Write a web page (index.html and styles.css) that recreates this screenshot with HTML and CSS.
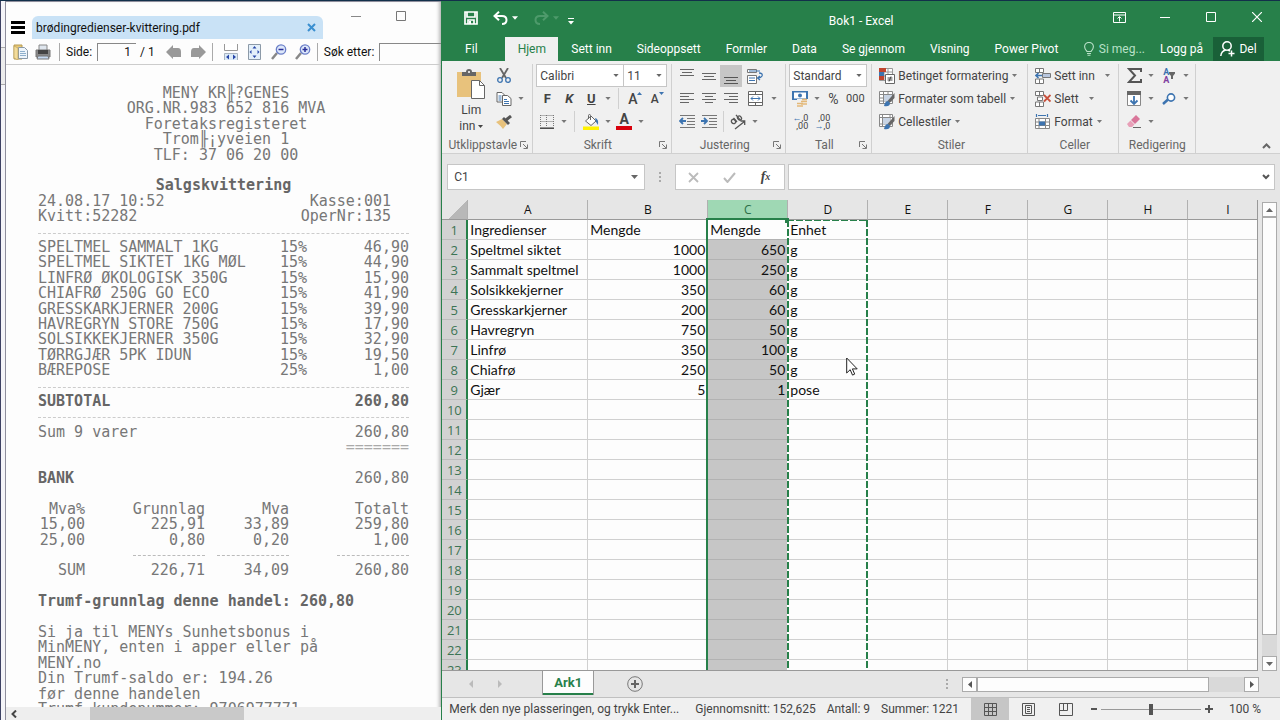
FILE: index.html
```html
<!DOCTYPE html>
<html lang="nb">
<head>
<meta charset="utf-8">
<title>Bok1 - Excel</title>
<link rel="stylesheet" href="styles.css">
</head>
<body>
<svg width="0" height="0" class="defs" aria-hidden="true">
  <symbol id="dd" viewBox="0 0 7 4"><path d="M0 0h7L3.500 4z" fill="currentColor"/></symbol>
  <symbol id="launch" viewBox="0 0 8 8"><path d="M.5 6V.5H6M3 3l4 4M7.500 3.500v4h-4" fill="none" stroke="#777"/></symbol>
</svg>
<div class="desktop">
  <div class="behind"><span></span></div>
  <section class="viewer">
    <header class="v-top">
      <button class="burger" aria-label="Meny"><i></i><i></i><i></i></button>
      <div class="v-tab"><span>brødingredienser-kvittering.pdf</span><button aria-label="Lukk fane"><svg width="9" height="9" viewBox="0 0 9 9"><path d="M1 1l7 7M8 1L1 8" stroke="#3a8fd0" stroke-width="2"/></svg></button></div>
      <div class="v-win">
        <button aria-label="Minimer"><svg width="10" height="10"><path d="M0 5.500h10" stroke="#888"/></svg></button>
        <button aria-label="Maksimer"><svg width="10" height="10"><path d="M.5.5h9v9h-9z" stroke="#777" fill="none"/></svg></button>
      </div>
    </header>
    <div class="v-tools">
      <button aria-label="Åpne"><svg width="16" height="16" viewBox="0 0 16 16"><path d="M1 1h8v14H1z" fill="#e6c878" stroke="#b79a50"/><path d="M5.500 3.500h6l3 3v8h-9z" fill="#eef5fb" stroke="#8a9aa8"/><path d="M7 7.500h5M7 9.500h6M7 11.500h6" stroke="#8fb0cc"/><path d="M1 2l4 2v12l-4-2z" fill="#f3dc9a" stroke="#b79a50" stroke-width=".6"/></svg></button>
      <button aria-label="Skriv ut"><svg width="16" height="16" viewBox="0 0 16 16"><path d="M4 1h8v6H4z" fill="#dfe6ee" stroke="#888"/><path d="M1 6h14v7H1z" fill="#888" stroke="#777"/><path d="M3 6h10v4H3z" fill="#444"/><path d="M3 12h10l1 3H2z" fill="#c4d8f0" stroke="#777"/></svg></button>
      <i class="v-sep"></i>
      <label for="page">Side:</label>
      <input id="page" class="page" value="1"><span class="total">/ 1</span>
      <button aria-label="Forrige"><svg width="16" height="14" viewBox="0 0 16 14"><path d="M0 7l7-7v3h5q3 0 3 4v5h-8v2z" fill="#999"/></svg></button>
      <button aria-label="Neste"><svg width="16" height="14" viewBox="0 0 16 14"><path d="M16 7L9 0v3H4q-3 0-3 4v5h8v2z" fill="#999"/></svg></button>
      <i class="v-sep"></i>
      <button aria-label="Tilpass bredde"><svg width="14" height="16" viewBox="0 0 14 16"><path d="M.5 0v6.500h13V0" fill="#fff" stroke="#999"/><path d="M.5 16V9.500h13V16" fill="#dcebf8" stroke="#a8b4c0"/><path d="M5 10.500v5L2 13zM9 10.500v5l3-2.500z" fill="#2746a8"/></svg></button>
      <button aria-label="Tilpass side"><svg width="14" height="16" viewBox="0 0 14 16"><path d="M.5.5h12v15H.5z" fill="#e4f0fa" stroke="#8c9aa8"/><path d="M6.500 2l2 2.500h-4zM6.500 14l2-2.500h-4zM1.500 8l2-2v4zM11.500 8l-2-2v4z" fill="#2746a8"/></svg></button>
      <button aria-label="Zoom ut"><svg width="16" height="16" viewBox="0 0 16 16"><path d="M1 15l5-6" stroke="#888" stroke-width="2.500"/><circle cx="10" cy="5.500" r="4.700" fill="#dde8fa" stroke="#6b7fc8" stroke-width="1.300"/><path d="M7.500 5.500h5" stroke="#2a2f9a" stroke-width="1.500"/></svg></button>
      <button aria-label="Zoom inn"><svg width="16" height="16" viewBox="0 0 16 16"><path d="M1 15l5-6" stroke="#888" stroke-width="2.500"/><circle cx="10" cy="5.500" r="4.700" fill="#dde8fa" stroke="#6b7fc8" stroke-width="1.300"/><path d="M7.500 5.500h5M10 3v5" stroke="#2a2f9a" stroke-width="1.500"/></svg></button>
      <i class="v-sep"></i>
      <label for="find">Søk etter:</label>
      <input id="find" class="find">
    </div>
    <main class="doc">
      <div class="receipt">
        <p class="mid">MENY KR╟?GENES</p>
        <p class="mid">ORG.NR.983 652 816 MVA</p>
        <p class="mid">Foretaksregisteret</p>
        <p class="mid">Trom╟¡yveien 1</p>
        <p class="mid">TLF: 37 06 20 00</p>
        <p></p>
        <p class="mid bold title">Salgskvittering</p>
        <p class="ends till"><span>24.08.17 10:52</span><span>Kasse:001</span></p>
        <p class="ends till"><span>Kvitt:52282</span><span>OperNr:135</span></p>
        <p class="rule"></p>
        <p class="item"><span>SPELTMEL SAMMALT 1KG</span><span>15%</span><span>46,90</span></p>
        <p class="item"><span>SPELTMEL SIKTET 1KG MØL</span><span>15%</span><span>44,90</span></p>
        <p class="item"><span>LINFRØ ØKOLOGISK 350G</span><span>15%</span><span>15,90</span></p>
        <p class="item"><span>CHIAFRØ 250G GO ECO</span><span>15%</span><span>41,90</span></p>
        <p class="item"><span>GRESSKARKJERNER 200G</span><span>15%</span><span>39,90</span></p>
        <p class="item"><span>HAVREGRYN STORE 750G</span><span>15%</span><span>17,90</span></p>
        <p class="item"><span>SOLSIKKEKJERNER 350G</span><span>15%</span><span>32,90</span></p>
        <p class="item"><span>TØRRGJÆR 5PK IDUN</span><span>15%</span><span>19,50</span></p>
        <p class="item"><span>BÆREPOSE</span><span>25%</span><span>1,00</span></p>
        <p class="rule"></p>
        <p class="ends bold"><span>SUBTOTAL</span><span>260,80</span></p>
        <p class="rule"></p>
        <p class="ends"><span>Sum 9 varer</span><span>260,80</span></p>
        <p class="ends faint"><span></span><span>=======</span></p>
        <p></p>
        <p class="ends"><b>BANK</b><span>260,80</span></p>
        <p></p>
        <p class="vat"><span>Mva%</span><span>Grunnlag</span><span>Mva</span><span>Totalt</span></p>
        <p class="vat"><span>15,00</span><span>225,91</span><span>33,89</span><span>259,80</span></p>
        <p class="vat"><span>25,00</span><span>0,80</span><span>0,20</span><span>1,00</span></p>
        <p class="vat sums"><span></span><i></i><i></i><i></i></p>
        <p class="vat"><span>SUM</span><span>226,71</span><span>34,09</span><span>260,80</span></p>
        <p></p>
        <p class="bold">Trumf-grunnlag denne handel: 260,80</p>
        <p></p>
        <p>Si ja til MENYs Sunhetsbonus i</p>
        <p>MinMENY, enten i apper eller på</p>
        <p>MENY.no</p>
        <p>Din Trumf-saldo er: 194.26</p>
        <p>før denne handelen</p>
        <p>Trumf-kundenummer: 9706977771</p>
      </div>
    </main>
    <div class="v-scroll"><button aria-label="Rull til venstre"><svg width="6" height="8"><path d="M5 .5L1.500 4 5 7.500" fill="none" stroke="#444" stroke-width="2"/></svg></button><i></i></div>
  </section>

  <section class="excel">
    <header class="titlebar">
      <div class="qat">
        <button aria-label="Lagre"><svg width="14" height="14" viewBox="0 0 14 14"><path d="M1 1h12v12H1zM3 1v5h8V1M4 13V9h6v4" fill="none" stroke="#fff" stroke-width="1.700"/><path d="M5 10h2v3H5z" fill="#fff"/></svg></button>
        <button aria-label="Angre"><svg width="15" height="14" viewBox="0 0 15 14"><path d="M6 .8L1.500 5 6 9.200M2 5h7q4.500 0 4.500 4T9 13" fill="none" stroke="#fff" stroke-width="2"/></svg></button>
        <button class="narrow" aria-label="Angre-liste"><svg width="6" height="4"><use href="#dd"/></svg></button>
        <button class="dim" aria-label="Gjør om"><svg width="15" height="14" viewBox="0 0 15 14"><path d="M9 .8L13.500 5 9 9.200M13 5H6Q1.500 5 1.500 9T6 13" fill="none" stroke="currentColor" stroke-width="2"/></svg></button>
        <button class="dim narrow" aria-label="Gjør om-liste"><svg width="6" height="4"><use href="#dd"/></svg></button>
        <button aria-label="Tilpass verktøylinjen"><svg width="6" height="7" viewBox="0 0 6 7"><path d="M0 .5h6" stroke="#fff"/><path d="M0 3h6L3 6.500z" fill="#fff"/></svg></button>
      </div>
      <h1>Bok1 - Excel</h1>
      <div class="win">
        <button aria-label="Visningsalternativer for bånd"><svg width="13" height="11" viewBox="0 0 13 11"><path d="M.5.5h12v10H.5zM.5 3h12M6.500 9.500V5M4.500 6.500l2-2 2 2" fill="none" stroke="#fff"/></svg></button>
        <button aria-label="Minimer"><svg width="10" height="10"><path d="M0 5.500h10" stroke="#fff"/></svg></button>
        <button aria-label="Maksimer"><svg width="10" height="10"><path d="M.5.5h9v9h-9z" stroke="#fff" fill="none"/></svg></button>
        <button aria-label="Lukk"><svg width="10" height="10"><path d="M0 0l10 10M10 0L0 10" stroke="#fff" stroke-width="1.200"/></svg></button>
      </div>
    </header>
    <nav class="tabs">
      <button class="file">Fil</button><button class="active">Hjem</button><button>Sett inn</button><button>Sideoppsett</button><button>Formler</button><button>Data</button><button>Se gjennom</button><button>Visning</button><button>Power Pivot</button>
      <span class="tabs-end">
        <button class="tell"><svg width="10" height="14" viewBox="0 0 10 14"><path d="M3 9.500Q.6 7 .6 4.800A4.400 4.400 0 019.400 4.800Q9.400 7 7 9.500zM3 11.500h4M3.500 13.300h3" fill="none" stroke="currentColor" stroke-width="1.100"/></svg>Si meg...</button>
        <button class="login">Logg på</button>
        <button class="share"><svg width="15" height="16" viewBox="0 0 15 16"><circle cx="7" cy="5" r="4.200" fill="none" stroke="#fff" stroke-width="1.500"/><path d="M.8 15q.5-5 5-6M8 9l2 1M11.500 9.500v6M8.500 12.500h6" fill="none" stroke="#fff" stroke-width="1.500"/></svg>Del</button>
      </span>
    </nav>
    <div class="ribbon">
      <div class="group g-clip">
        <div class="clip">
          <button class="paste"><svg width="28" height="30" viewBox="0 0 28 30"><path d="M0 3h24v25H0z" fill="#e8c27c"/><path d="M5 3h4q0-3 3-3t3 3h4v4H5z" fill="#666"/><circle cx="12" cy="3" r="1" fill="#fff"/><path d="M14.500 11.500h8l5 5v13h-13z" fill="#fff" stroke="#666"/><path d="M22.500 11.500v5h5" fill="none" stroke="#666"/></svg><span>Lim<br>inn <svg width="5" height="3"><use href="#dd"/></svg></span></button>
          <div class="rows">
            <div class="row"><button class="b" aria-label="Klipp ut"><svg width="14" height="15" viewBox="0 0 14 15"><path d="M3 0l6 10M11 0L5 10" stroke="#666" stroke-width="1.800"/><circle cx="3" cy="12" r="2.300" fill="none" stroke="#3d74b0" stroke-width="1.300"/><circle cx="11" cy="12" r="2.300" fill="none" stroke="#3d74b0" stroke-width="1.300"/></svg></button></div>
            <div class="row"><button class="b" aria-label="Kopier"><svg width="16" height="14" viewBox="0 0 16 14"><path d="M1 .5h5l3 3V10H1z" fill="#fff" stroke="#666"/><path d="M6.500 3.500h5l3.500 3v7H6.500z" fill="#fff" stroke="#666"/><path d="M2.500 4h3M2.500 6h3M2.500 8h3M8 7.500h3M8 9.500h5M8 11.500h5" stroke="#3d74b0"/></svg></button><button class="dd" aria-label="Kopieringsvalg"><svg width="6" height="3"><use href="#dd"/></svg></button></div>
            <div class="row"><button class="b" aria-label="Kopier format"><svg width="16" height="14" viewBox="0 0 16 14"><path d="M0 7l6-3 5 5-4 5q-2-3-7-7z" fill="#e8c27c"/><path d="M6 4l2-2 6 6-2 2z" fill="#555"/><path d="M10 5l5-4" stroke="#555" stroke-width="3"/></svg></button></div>
          </div>
        </div>
        <div class="cap"><span>Utklippstavle</span><svg width="8" height="8"><use href="#launch"/></svg></div>
      </div>
      <div class="group g-font">
        <div class="row">
          <div class="combo c-name"><input value="Calibri" aria-label="Skrift"><svg width="6" height="3"><use href="#dd"/></svg></div><div class="combo c-size"><input value="11" aria-label="Skriftstørrelse"><svg width="6" height="3"><use href="#dd"/></svg></div>
        </div>
        <div class="row">
          <button class="b bold" aria-label="Fet">F</button><button class="b bold ital" aria-label="Kursiv">K</button><button class="b bold under" aria-label="Understreking">U</button><button class="dd" aria-label="Understrekingsvalg"><svg width="6" height="3"><use href="#dd"/></svg></button><i class="sep"></i><button class="b grow" aria-label="Større skrift">A<svg width="5" height="3"><path d="M0 3h5L2.500 0z" fill="#3d74b0"/></svg></button><button class="b shrink" aria-label="Mindre skrift">A<svg width="5" height="3"><path d="M0 0h5L2.500 3z" fill="#3d74b0"/></svg></button>
        </div>
        <div class="row">
          <button class="b" aria-label="Kantlinjer"><svg width="14" height="14" viewBox="0 0 14 14"><path d="M.5.5h13M.5 6.500h13M.5 0v12M6.500 0v12M13.500 0v12" stroke="#777" stroke-dasharray="1 1"/><path d="M0 13.200h14" stroke="#444" stroke-width="1.500"/></svg></button><button class="dd" aria-label="Kantlinjevalg"><svg width="6" height="3"><use href="#dd"/></svg></button><i class="sep"></i><button class="b" aria-label="Fyllfarge"><svg width="16" height="16" viewBox="0 0 16 16"><path d="M0 12.500h16V16H0z" fill="#fff200"/><path d="M2.500 7L8 2l5 5-5 4.500z" fill="#fff" stroke="#666"/><path d="M5.500 5V1.500q0-1 1-1t1 1V6" fill="none" stroke="#666"/><path d="M12 4q4 1 3 7l-2-3z" fill="#3d74b0"/></svg></button><button class="dd" aria-label="Fyllfargevalg"><svg width="6" height="3"><use href="#dd"/></svg></button><button class="b fcolor" aria-label="Skriftfarge">A</button><button class="dd" aria-label="Skriftfargevalg"><svg width="6" height="3"><use href="#dd"/></svg></button>
        </div>
        <div class="cap"><span>Skrift</span><svg width="8" height="8"><use href="#launch"/></svg></div>
      </div>
      <div class="group g-align">
        <div class="row">
          <button class="b" aria-label="Toppjuster"><svg width="14" height="16"><path d="M0 1.500h14M2 4.500h10M0 7.500h14" stroke="#666"/></svg></button><button class="b" aria-label="Midtstill loddrett"><svg width="14" height="16"><path d="M0 5.500h14M2 8.500h10M0 11.500h14" stroke="#666"/></svg></button><button class="b on" aria-label="Bunnjuster"><svg width="14" height="16"><path d="M0 9.500h14M2 12.500h10M0 15.500h14" stroke="#555"/></svg></button><button class="b wide" aria-label="Bryt tekst"><svg width="16" height="16" viewBox="0 0 16 16"><path d="M.5 1.500h9v3h-9zM.5 7.500h9v8h-9z" fill="#fff" stroke="#777"/><path d="M2 3h11M2 10h6M2 12.500h6" stroke="#3d74b0"/><path d="M12 5q4 0 3 3-1 2-4 2M13 8l-2.500 2 2.500 2" fill="none" stroke="#3d74b0" stroke-width="1.300"/></svg></button>
        </div>
        <div class="row">
          <button class="b" aria-label="Venstrejuster"><svg width="14" height="12"><path d="M0 .5h14M0 3.500h9M0 6.500h14M0 9.500h9" stroke="#666"/></svg></button><button class="b" aria-label="Midtstill"><svg width="14" height="12"><path d="M0 .5h14M3 3.500h8M0 6.500h14M3 9.500h8" stroke="#666"/></svg></button><button class="b" aria-label="Høyrejuster"><svg width="14" height="12"><path d="M0 .5h14M5 3.500h9M0 6.500h14M5 9.500h9" stroke="#666"/></svg></button><button class="b wide" aria-label="Slå sammen og midtstill"><svg width="15" height="15" viewBox="0 0 15 15"><path d="M.5.5h14v14H.5zM.5 3.500h14M.5 11.500h14M7.500 0v3M7.500 12v3" fill="#fff" stroke="#666"/><path d="M3 7.500h9M5 5.500l-2 2 2 2M10 5.500l2 2-2 2" fill="none" stroke="#3d74b0"/></svg></button><button class="dd" aria-label="Sammenslåingsvalg"><svg width="6" height="3"><use href="#dd"/></svg></button>
        </div>
        <div class="row">
          <button class="b" aria-label="Reduser innrykk"><svg width="16" height="13"><path d="M1 .5h15M8 3.500h8M8 6.500h8M8 9.500h8M1 12.500h15" stroke="#777"/><path d="M1 6h6M4 3L1 6l3 3" fill="none" stroke="#3d74b0" stroke-width="1.800"/></svg></button><button class="b" aria-label="Øk innrykk"><svg width="16" height="13"><path d="M1 .5h15M8 3.500h8M8 6.500h8M8 9.500h8M1 12.500h15" stroke="#777"/><path d="M0 6h6M3 3l3 3-3 3" fill="none" stroke="#3d74b0" stroke-width="1.800"/></svg></button><i class="sep slim"></i><button class="b" aria-label="Retning"><svg width="16" height="16" viewBox="0 0 16 16"><g fill="none" stroke="#555" stroke-width="1.300"><ellipse cx="3.500" cy="7.500" rx="2" ry="2.300" transform="rotate(-40 3.500 7.500)"/><path d="M3.500 4l3.500 4M6 .8l4.500 5.500"/><ellipse cx="9.500" cy="4" rx="1.800" ry="2.200" transform="rotate(-40 9.500 4)"/><path d="M5 15l9.500-7.500M10.500 7h4.200v4"/></g></svg></button><button class="dd" aria-label="Retningsvalg"><svg width="6" height="3"><use href="#dd"/></svg></button>
        </div>
        <div class="cap"><span>Justering</span><svg width="8" height="8"><use href="#launch"/></svg></div>
      </div>
      <div class="group g-num">
        <div class="row"><div class="combo c-num"><input value="Standard" aria-label="Tallformat"><svg width="6" height="3"><use href="#dd"/></svg></div></div>
        <div class="row">
          <button class="b" aria-label="Valutaformat"><svg width="16" height="16" viewBox="0 0 16 16"><path d="M0 0h16v9H0z" fill="#3d74b0"/><path d="M2 1.500h12v6H2z" fill="#fff"/><circle cx="8" cy="4.500" r="2" fill="#3d74b0"/><path d="M5 8h11v8H5z" fill="#f0f0f0"/><path d="M10 8.500h5M9 10.500h6M5 12.500h6M9 13h6M5 15h6" stroke="#e3b878" stroke-width="1.600"/></svg></button><button class="dd" aria-label="Valutavalg"><svg width="6" height="3"><use href="#dd"/></svg></button><button class="b pct" aria-label="Prosent">%</button><button class="b mil" aria-label="Tusenskille">000</button>
        </div>
        <div class="row">
          <button class="b dec" aria-label="Flere desimaler"><span><em>←</em>,0<br>,00</span></button><button class="b dec" aria-label="Færre desimaler"><span>,00<br><em>→</em>,0</span></button>
        </div>
        <div class="cap"><span>Tall</span><svg width="8" height="8"><use href="#launch"/></svg></div>
      </div>
      <div class="group g-style">
        <div class="row"><button class="t"><svg width="16" height="16" viewBox="0 0 16 16"><path d="M.5.5h13v12H.5zM.5 4h13M.5 8h13M5 .5v12M9 .5v12" fill="#fff" stroke="#999"/><path d="M0 0h7v4H0zM0 8h5v4H0z" fill="#c0452f"/><path d="M0 4h5v4H0z" fill="#3d74b0"/><path d="M6.500 6.500h9v9h-9z" fill="#fff" stroke="#666"/><path d="M8.500 10h5M8.500 12h5M12 8.500l-2 5" stroke="#444"/></svg>Betinget formatering<svg class="a" width="5" height="3"><use href="#dd"/></svg></button></div>
        <div class="row"><button class="t"><svg width="16" height="16" viewBox="0 0 16 16"><path d="M.5.5h13v12H.5zM.5 3.500h13M.5 7h13M.5 10h13M4.500.5v12M9 .5v12" fill="#fff" stroke="#888"/><path d="M5 4h8v6H5z" fill="#c8d4e4"/><path d="M15.500 2v5l-5 5-2-2z" fill="#666"/><path d="M5 15q1-5 4-5l2 2q0 4-6 3z" fill="#3d74b0"/></svg>Formater som tabell<svg class="a" width="5" height="3"><use href="#dd"/></svg></button></div>
        <div class="row"><button class="t"><svg width="16" height="16" viewBox="0 0 16 16"><path d="M.5.5h13v12H.5zM.5 3.500h13M.5 10h13M3.500.5v12M11 .5v12" fill="#fff" stroke="#888"/><path d="M4 4h7v6H4z" fill="#c8d4e4"/><path d="M15.500 2v5l-5 5-2-2z" fill="#666"/><path d="M5 15q1-5 4-5l2 2q0 4-6 3z" fill="#3d74b0"/></svg>Cellestiler<svg class="a" width="5" height="3"><use href="#dd"/></svg></button></div>
        <div class="cap"><span>Stiler</span></div>
      </div>
      <div class="group g-cells">
        <div class="row"><button class="t far"><svg width="16" height="16" viewBox="0 0 16 16"><path d="M.5.5h8v4h-8zM.5 11h8v4.500h-8zM4.500.5v4M4.500 11v4.500M7.500 5.500h8v4h-8z" fill="#fff" stroke="#777"/><path d="M8 6h7v3H8z" fill="#b8c6de"/><path d="M1 7.500h6M3.500 5L1 7.500 3.500 10" fill="none" stroke="#3d74b0" stroke-width="1.600"/></svg>Sett inn<svg class="a" width="5" height="3"><use href="#dd"/></svg></button></div>
        <div class="row"><button class="t far"><svg width="16" height="16" viewBox="0 0 16 16"><path d="M.5.5h8v4h-8zM.5 11h8v4.500h-8zM4.500.5v4M4.500 11v4.500M2.500 6h5v3.500h-5z" fill="#fff" stroke="#777"/><path d="M9 4l6.500 6.500M15.500 4L9 10.500" stroke="#c8503c" stroke-width="1.800"/></svg>Slett<svg class="a" width="5" height="3"><use href="#dd"/></svg></button></div>
        <div class="row"><button class="t"><svg width="16" height="16" viewBox="0 0 16 16"><path d="M.5 4.500h14v10H.5zM.5 8h14M.5 11.500h14M4 4.500v10M10.500 4.500v10" fill="#fff" stroke="#888"/><path d="M4 7.500h6v4H4z" fill="#3d74b0"/><path d="M1.500 0v3M12.500 0v3M3 1.500h8" stroke="#3d74b0" stroke-width="1.200"/></svg>Format<svg class="a" width="5" height="3"><use href="#dd"/></svg></button></div>
        <div class="cap"><span>Celler</span></div>
      </div>
      <div class="group g-edit">
        <div class="row"><button class="b" aria-label="Autosummer"><svg width="15" height="15" viewBox="0 0 15 15"><path d="M14 4V1H2l6 6.500L2 14h12v-3" fill="none" stroke="#555" stroke-width="2"/></svg></button><button class="dd" aria-label="Summeringsvalg"><svg width="6" height="3"><use href="#dd"/></svg></button><button class="b sort" aria-label="Sorter og filtrer"><span><em>A</em><br>A</span><svg width="6" height="7"><path d="M0 0h6v1.500L4 4v3H2V4L0 1.500z" fill="#666"/></svg></button><button class="dd" aria-label="Sorteringsvalg"><svg width="6" height="3"><use href="#dd"/></svg></button></div>
        <div class="row"><button class="b" aria-label="Fyll"><svg width="14" height="15" viewBox="0 0 14 15"><path d="M.5.5h13v14H.5z" fill="#fff" stroke="#888"/><path d="M0 0h14v4H0z" fill="#666"/><path d="M7 5v8M3.500 9.500L7 13l3.500-3.500" fill="none" stroke="#3d74b0" stroke-width="1.800"/></svg></button><button class="dd" aria-label="Fyllvalg"><svg width="6" height="3"><use href="#dd"/></svg></button><button class="b sort" aria-label="Søk og merk"><svg width="14" height="12" viewBox="0 0 14 12"><path d="M1 11l5-4.500" stroke="#3d74b0" stroke-width="2.500"/><circle cx="9" cy="4.500" r="3.600" fill="#fff" stroke="#3d74b0" stroke-width="1.600"/></svg></button><button class="dd" aria-label="Søkevalg"><svg width="6" height="3"><use href="#dd"/></svg></button></div>
        <div class="row"><button class="b" aria-label="Fjern"><svg width="14" height="13" viewBox="0 0 14 13"><path d="M9 0l4 4-5 5-4-4z" fill="#d9769a"/><path d="M3.500 5.500l4 4L5 12H2L0 9z" fill="#e8a0b8"/><path d="M6 12.500h8" stroke="#666"/></svg></button><button class="dd" aria-label="Fjernvalg"><svg width="6" height="3"><use href="#dd"/></svg></button></div>
        <div class="cap"><span>Redigering</span></div>
      </div>
      <button class="collapse" aria-label="Skjul båndet"><svg width="9" height="6"><path d="M1 5l3.500-3.500L8 5" fill="none" stroke="#666" stroke-width="2"/></svg></button>
    </div>
    <div class="formula">
      <div class="namebox"><input value="C1" aria-label="Navneboks"><svg width="7" height="4"><use href="#dd"/></svg></div>
      <i class="grip"></i>
      <div class="fx"><button aria-label="Avbryt"><svg width="11" height="11"><path d="M1 1l9 9M10 1l-9 9" stroke="#bbb" stroke-width="1.800"/></svg></button><button aria-label="Skriv inn"><svg width="13" height="11"><path d="M1 6l3.500 4L12 1" fill="none" stroke="#bbb" stroke-width="2"/></svg></button><button class="fxl" aria-label="Sett inn funksjon">f<sub>x</sub></button></div>
      <div class="fbar"><input aria-label="Formellinje"><svg width="8" height="6"><path d="M1 1l3 3 3-3" fill="none" stroke="#555" stroke-width="2"/></svg></div>
    </div>
    <div class="work">
      <div class="sheet">
        <table>
          <colgroup><col class="k-head"><col class="k-wide"><col class="k-wide"><col class="k"><col class="k"><col class="k"><col class="k"><col class="k"><col class="k"><col class="k"></colgroup>
          <thead><tr><th class="corner"></th><th>A</th><th>B</th><th class="sel">C</th><th>D</th><th>E</th><th>F</th><th>G</th><th>H</th><th>I</th></tr></thead>
          <tbody id="cells"></tbody>
        </table>
        <div class="selection"><i></i></div>
        <div class="ants"></div>
        <svg class="cursor" width="12" height="19" viewBox="0 0 12 19"><path d="M.7 1v15l3.500-3.300 2.300 5.400 2.200-1-2.300-5.200h4.800z" fill="#fff" stroke="#222"/></svg>
      </div>
      <div class="vscroll"><button aria-label="Rull opp"><svg width="7" height="4"><path d="M0 4h7L3.500 0z" fill="#666"/></svg></button><i></i><b></b><button aria-label="Rull ned"><svg width="7" height="4"><path d="M0 0h7L3.500 4z" fill="#666"/></svg></button></div>
    </div>
    <div class="sheetbar">
      <button class="nav" aria-label="Forrige ark"><svg width="4" height="8"><path d="M4 0v8L0 4z" fill="#bbb"/></svg></button>
      <button class="nav" aria-label="Neste ark"><svg width="4" height="8"><path d="M0 0v8l4-4z" fill="#bbb"/></svg></button>
      <button class="ark">Ark1</button>
      <button class="add" aria-label="Nytt ark"><svg width="16" height="16"><circle cx="8" cy="8" r="7.300" fill="none" stroke="#777"/><path d="M8 4v8M4 8h8" stroke="#666" stroke-width="2"/></svg></button>
      <i class="grip"></i>
      <div class="hscroll"><button aria-label="Rull til venstre"><svg width="4" height="7"><path d="M4 0v7L0 3.500z" fill="#555"/></svg></button><i></i><b></b><button aria-label="Rull til høyre"><svg width="4" height="7"><path d="M0 0v7l4-3.500z" fill="#555"/></svg></button></div>
    </div>
    <footer class="status">
      <span class="msg">Merk den nye plasseringen, og trykk Enter...</span>
      <span>Gjennomsnitt: 152,625</span><span>Antall: 9</span><span>Summer: 1221</span>
      <div class="views">
        <button class="on" aria-label="Normal"><svg width="13" height="13"><path d="M.5.5h12v12H.5zM.5 4.500h12M.5 8.500h12M4.500.5v12M8.500.5v12" fill="none" stroke="#555"/></svg></button>
        <button aria-label="Sideoppsett"><svg width="13" height="13"><path d="M.5.5h12v12H.5zM3.500 2.500h6v8h-6zM5 4.500h3M5 6.500h3M5 8.500h3" fill="none" stroke="#555"/></svg></button>
        <button aria-label="Sideskift"><svg width="14" height="13"><path d="M.5.5h13v12H.5zM.5 7.500h8v-7M4.500.5v7" fill="none" stroke="#555"/></svg></button>
      </div>
      <div class="zoom"><button aria-label="Zoom ut"><svg width="6" height="8"><path d="M0 4h6" stroke="#555" stroke-width="2"/></svg></button><input type="range" min="0" max="100" value="50" aria-label="Zoom"><button aria-label="Zoom inn"><svg width="8" height="8"><path d="M0 4h8M4 0v8" stroke="#555" stroke-width="2"/></svg></button><span>100 %</span></div>
    </footer>
  </section>
</div>
<script src="app.js"></script>
</body>
</html>
```

FILE: styles.css
```css
* { box-sizing: border-box; }
body { margin: 0; font-family: Roboto, "Open Sans", sans-serif; font-size: 12px; line-height: 16px; color: #444; background: #12304a; }
button { border: 0; padding: 0; margin: 0; background: none; font: inherit; color: inherit; display: flex; align-items: center; justify-content: center; }
input { border: 0; padding: 0; margin: 0; background: none; font: inherit; color: inherit; min-width: 0; outline: 0; }
.defs { position: absolute; }
.desktop { display: flex; height: 100vh; padding-top: 1px; }
.bold { font-weight: 700; }

/* desktop sliver left of the viewer */
.behind { width: 5px; background: #f4f4f8; border-left: 1px solid #3d4263; }
.behind span { display: block; height: 38px; margin-top: 46px; border: solid #aaa; border-width: 1px 0; background: #ececec; }

/* PDF viewer */
.viewer { flex: 436 1 0; min-width: 0; display: flex; flex-direction: column; background: #fdfdfd; border: 1px solid #8e8e9c; border-width: 1px 0 0 1px; color: #111; box-shadow: inset -4px 0 4px -3px #999; }
.v-top { display: flex; height: 37px; padding-left: 5px; }
.burger { flex-direction: column; gap: 2px; width: 14px; align-self: flex-end; margin-bottom: 5px; }
.burger i { width: 14px; height: 3px; background: #000; }
.v-tab { display: flex; align-items: center; justify-content: space-between; width: 291px; height: 23px; margin: 14px 0 0 7px; padding: 0 7px 0 4px; background: #c9e2f6; border-radius: 6px 6px 0 0; }
.v-win { display: flex; align-items: flex-start; gap: 35px; margin: 9px 0 0 28px; }
.v-tools { display: flex; align-items: center; height: 26px; padding-left: 6px; border-bottom: 1px solid #ccc; white-space: nowrap; }
.v-tools button { width: 24px; height: 24px; flex: none; }
.v-tools button:nth-child(1) { width: 17px; }
.v-tools button:nth-child(2) { width: 28px; }
.v-sep { width: 1px; height: 18px; margin: 0 6px 0 2px; background: #aaa; flex: none; }
.page { width: 39px; height: 18px; margin-left: 5px; text-align: right; padding-right: 5px; border: solid #888; border-width: 1px 0 0 1px; }
.total { margin: 0 7px 0 4px; }
.find { flex: 1; height: 18px; margin-left: 5px; border: solid #888; border-width: 1px 0 0 1px; }
.doc { flex: 1; min-height: 0; overflow: hidden; }
.receipt { width: 371px; margin-left: 32px; padding-top: 21px; font-family: "DejaVu Sans Mono", monospace; font-size: 15px; color: #777; }
.receipt p { margin: 0; height: 15px; line-height: 15px; white-space: pre; }
.receipt p:nth-child(5n+2), .receipt p:nth-child(5n+4) { height: 16px; }
.receipt .mid { text-align: center; padding-left: 5px; }
.receipt .title { padding: 0; }
.receipt .bold, .receipt b { color: #666; }
.ends { display: flex; justify-content: space-between; }
.till { padding-right: 18px; }
.receipt .faint { color: #aaa; }
.rule::after { content: ""; display: block; height: 8px; border-bottom: 1px dashed #ccc; }
.item { display: grid; grid-template-columns: 1fr 30px 99px; }
.item span:last-child { text-align: right; }
.vat { display: grid; grid-template-columns: 47px 120px 84px 1fr; text-align: right; }
.vat i { height: 8px; width: 72px; justify-self: end; border-bottom: 1px dashed #bbb; }
.v-scroll { display: flex; height: 13px; background: #eee; }
.v-scroll button { width: 16px; }
.v-scroll i { width: 154px; margin-left: 68px; background: #c9c9c9; }

/* spreadsheet window */
.excel { flex: 839 1 0; min-width: 0; display: flex; flex-direction: column; border-left: 1px solid #27804a; background: #e6e6e6; }
.titlebar { display: grid; grid-template-columns: 1fr auto 1fr; align-items: start; height: 36px; background: #27804a; color: #fff; }
.titlebar h1 { margin: 12px 0 0; font: inherit; }
.qat { display: flex; padding: 9px 0 0 21px; }
.qat button { width: 16px; height: 15px; }
.qat button:nth-child(2) { margin-left: 13px; }
.qat .narrow { width: 14px; }
.qat button:nth-child(4) { margin-left: 11px; }
.qat button:last-child { align-items: flex-end; }
.dim { color: #4e9a6b; }
.win { display: flex; justify-content: flex-end; padding: 10px 11px 0 0; }
.win button { width: 24px; height: 12px; }
.win button + button { margin-left: 22px; }
.tabs { display: flex; height: 24px; background: #27804a; color: #fff; white-space: nowrap; }
.tabs button { padding: 0 12px 0 13px; }
.tabs .file { padding: 0; width: 63px; padding-right: 5px; }
.tabs .active { background: #f0f0f0; color: #27804a; padding: 0; width: 53px; }
.tabs-end { display: flex; margin-left: auto; margin-right: 16px; }
.tabs .tabs-end button { padding: 0; }
.tabs .tell { gap: 5px; color: #b9e0c8; }
.tabs .login { margin: 0 10px 0 15px; }
.tabs .share { gap: 4px; width: 51px; background: #196038; }
.ribbon { display: flex; height: 93px; background: #f0f0f0; border-bottom: 1px solid #d0d0d0; padding-top: 3px; white-space: nowrap; }
.group { flex: none; display: flex; flex-direction: column; height: 89px; padding-left: 3px; border-right: 1px solid #d0d0d0; }
.g-clip { width: 91px; }
.g-font { width: 139px; }
.g-align { width: 114px; padding-left: 4px; }
.g-num { width: 86px; }
.g-style { width: 156px; padding-left: 7px; }
.g-cells { width: 91px; padding-left: 7px; }
.g-edit { width: 77px; padding-left: 4px; }
.row { display: flex; height: 23px; align-items: center; }
.cap { display: flex; align-items: center; height: 17px; margin-top: auto; padding-right: 4px; color: #666; }
.cap span { flex: 1; text-align: center; }
.clip { display: flex; height: 69px; }
.paste { flex-direction: column; width: 44px; padding-top: 5px; text-align: center; justify-content: flex-start; gap: 3px; margin-left: 4px; }
.paste > svg { flex: none; }
.paste span svg { vertical-align: middle; }
.dd { width: 11px; height: 22px; color: #777; }
.a { color: #777; }
.b { width: 22px; height: 22px; }
.wide { width: 26px; }
.on { background: #c6c6c6; }
.ital { font-style: italic; }
.under { text-decoration: underline; }
.row .bold { font-size: 13px; }
.sep { width: 1px; height: 21px; margin: 0 5px; background: #d0d0d0; }
.slim { margin: 0 3px; }
.grow { font-size: 14px; font-weight: 500; }
.shrink { font-size: 12px; font-weight: 500; }
.b svg + svg, .grow svg, .shrink svg { align-self: flex-start; margin-top: 4px; }
.fcolor { font-size: 14px; font-weight: 700; line-height: 13px; height: 17px; width: 16px; margin: 0 3px; border-bottom: 4px solid #d8000c; }
.combo { display: flex; align-items: center; height: 23px; padding: 0 4px 0 3px; background: #fff; border: 1px solid #c6c6c6; color: #666; }
.combo input { flex: 1; color: #444; }
.c-name { width: 88px; }
.c-size { width: 43px; border-left: 0; }
.c-num { width: 78px; }
.pct { font-size: 14px; }
.mil { font-size: 11px; }
.dec { font-size: 9px; line-height: 8px; text-align: right; }
.dec em { color: #3d74b0; font-style: normal; }
.t { gap: 3px; height: 22px; }
.t .a { margin-left: 1px; }
.far .a { margin-left: 7px; }
.sort { margin-left: 2px; }
.sort span { font-size: 9px; line-height: 8px; color: #8040a0; font-weight: 700; }
.sort em { color: #3d74b0; font-style: normal; }
.collapse { margin: auto 9px 4px auto; }
.formula { display: flex; align-items: center; height: 46px; padding: 0 5px 0 5px; }
.namebox, .fx, .fbar { display: flex; align-items: center; height: 26px; background: #fff; border: 1px solid #c6c6c6; }
.namebox { width: 198px; padding: 0 6px; color: #666; }
.namebox input, .fbar input { flex: 1; color: #444; }
.grip { width: 2px; height: 11px; margin: 0 14px; background: repeating-linear-gradient(#aaa 0 2px, transparent 2px 4px); }
.fx { width: 110px; padding: 0 14px 0 12px; justify-content: space-between; }
.fxl { font-family: "Liberation Serif", serif; font-style: italic; font-weight: 700; font-size: 14px; }
.fxl sub { font-size: 10px; vertical-align: baseline; }
.fbar { flex: 1; margin-left: 3px; padding: 0 4px; }
.work { display: flex; flex: 1; min-height: 0; }
.sheet { flex: 1; min-width: 0; position: relative; overflow: hidden; border: solid #999; border-width: 0 1px 1px 0; }
.sheet table { width: 100%; table-layout: fixed; border-collapse: separate; border-spacing: 0; background: #fdfdfd; font-family: Lato, sans-serif; font-size: 14px; line-height: 18px; color: #111; }
.k-head { width: 26px; }
.k-wide { width: 120px; }
.k { width: 80px; }
th, td { height: 20px; padding: 0 2px; border: solid #d0d0d0; border-width: 0 1px 1px 0; white-space: nowrap; }
thead th { font-family: "Open Sans", sans-serif; font-weight: 400; font-size: 12px; line-height: 18px; background: #e6e6e6; border-color: #b0b0b0; border-bottom-color: #999; }
thead .sel { background: #9fd8b4; color: #2c6e48; }
.corner { background: linear-gradient(135deg, #e6e6e6 58%, #b8b8b8 58%); }
tbody th { font-family: "Open Sans", sans-serif; font-weight: 400; font-size: 13px; background: #d2d2d2; color: #3c7454; border-color: #bcbcbc; border-right: 2px solid #27804a; }
td.n { text-align: right; }
td.s { background: #c6c6c6; border-color: #b2b2b2; border-right-color: #fff; }
tr:first-child td.s { background: #fdfdfd; }
.selection { position: absolute; left: 264px; top: 18px; width: 82px; bottom: 0; border: solid #27804a; border-width: 2px 0 0 2px; }
.selection i { position: absolute; right: -1px; top: -2px; width: 4px; height: 5px; background: #27804a; }
.ants { position: absolute; left: 345px; top: 20px; width: 81px; bottom: 0;
  background: repeating-linear-gradient(#27804a 0 7px, #fff 7px 9px) left / 2px 100% no-repeat,
    repeating-linear-gradient(#27804a 0 7px, #fff 7px 9px) right / 2px 100% no-repeat,
    repeating-linear-gradient(to right, #27804a 0 7px, #fff 7px 9px) top / 100% 1px no-repeat; }
.cursor { position: absolute; left: 404px; top: 157px; }
.vscroll { display: flex; flex-direction: column; width: 15px; margin: 2px 3px 0 4px; background: #d9d9d9; }
.vscroll button { height: 15px; flex: none; }
.vscroll button, .vscroll i, .hscroll button, .hscroll i { background: #fdfdfd; border: 1px solid #ababab; }
.vscroll i { flex: 419; }
.vscroll b { flex: 21; }
.sheetbar { display: flex; align-items: center; height: 27px; padding: 0 21px 0 14px; border-bottom: 1px solid #c0c0c0; }
.nav { width: 29px; }
.ark { width: 52px; height: 24px; margin: 0 33px 0 28px; align-self: flex-start; background: #fdfdfd; border: solid #999; border-width: 0 1px; box-shadow: inset 0 -2px #27804a; color: #27804a; font-weight: 700; font-size: 13px; }
.sheetbar .grip { margin: 0 14px 0 auto; }
.hscroll { display: flex; width: 297px; height: 15px; background: #d9d9d9; }
.hscroll button { width: 15px; }
.hscroll i { flex: 232; }
.hscroll b { flex: 35; }
.status { display: flex; align-items: center; height: 22px; padding: 0 19px 0 7px; background: #f0f0f0; white-space: nowrap; }
.status > span { margin-right: 11px; }
.status .msg { width: 235px; }
.views { display: flex; align-self: stretch; margin-left: auto; }
.views button { width: 38px; }
.zoom { display: flex; align-items: center; margin-left: 6px; }
.zoom input { -webkit-appearance: none; appearance: none; width: 100px; height: 12px; margin: 0 4px 0 4px; background: linear-gradient(#999, #999) center / 100% 1px no-repeat; }
.zoom input::-webkit-slider-thumb { -webkit-appearance: none; width: 4px; height: 11px; background: #555; }
.zoom span { margin-left: 16px; }
```

FILE: app.js
```js
const data = [
  ["Ingredienser", "Mengde", "Mengde", "Enhet"],
  ["Speltmel siktet", 1000, 650, "g"],
  ["Sammalt speltmel", 1000, 250, "g"],
  ["Solsikkekjerner", 350, 60, "g"],
  ["Gresskarkjerner", 200, 60, "g"],
  ["Havregryn", 750, 50, "g"],
  ["Linfrø", 350, 100, "g"],
  ["Chiafrø", 250, 50, "g"],
  ["Gjær", 5, 1, "pose"]
];
const body = document.getElementById("cells");
for (let r = 0; r < 23; r++) {
  const tr = body.insertRow();
  const th = document.createElement("th");
  th.textContent = r + 1;
  tr.append(th);
  for (let c = 0; c < 9; c++) {
    const td = tr.insertCell();
    const value = data[r] && data[r][c];
    if (value !== undefined) td.textContent = value;
    if (typeof value === "number") td.classList.add("n");
    if (c === 2) td.classList.add("s");
  }
}
```
